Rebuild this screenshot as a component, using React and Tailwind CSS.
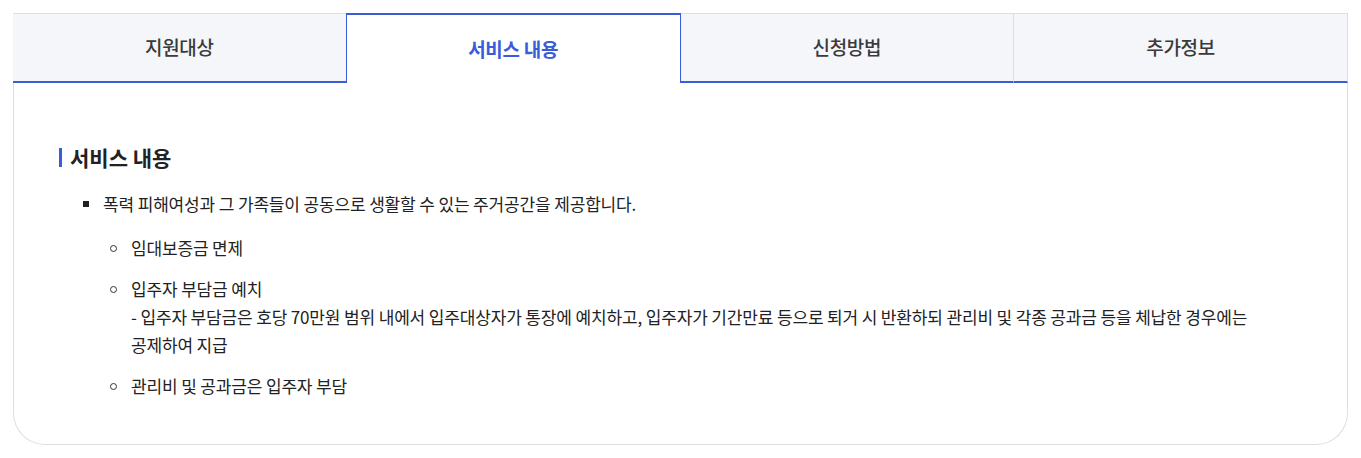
import React from 'react';

const TABS = ['지원대상', '서비스 내용', '신청방법', '추가정보'];

const FONT = { fontFamily: '"Noto Sans CJK KR", "Noto Sans", sans-serif' };

function SubItem({ children }) {
  return (
    <li className="flex gap-[14px] leading-[28px]">
      <span className="mt-[11px] w-[7px] h-[7px] shrink-0 rounded-full border border-[#333]" />
      <div>{children}</div>
    </li>
  );
}

export default function App() {
  const active = 1;
  return (
    <div className="bg-white w-[1361px] h-[458px] pt-[13px] px-[13px]" style={FONT}>
      <div className="border-x border-b border-[#dedede] rounded-b-[32px] h-[432px]">
        {/* Tabs */}
        <div className="flex h-[70px] -mx-px">
          {TABS.map((t, i) => i === active ? (
            <div key={t} className="flex-1 flex items-center justify-center bg-white border-t-2 border-x border-[#3b5cd9] text-[19px] font-bold text-[#3b5cd9] tracking-[-0.3px]">
              {t}
            </div>
          ) : (
            <div key={t} className={`flex-1 flex items-center justify-center bg-[#f5f6fa] border-t border-[#dedede] border-b-2 border-b-[#3b5cd9] text-[19px] font-medium text-[#3a3a3a] tracking-[-0.3px] ${i === 3 ? 'border-l border-r' : ''}`}>
              {t}
            </div>
          ))}
        </div>

        {/* Content */}
        <div className="px-[45px] pt-[62px] text-[#222] break-keep">
          <h3 className="flex items-center gap-[8px] text-[21px] font-bold leading-[24px]">
            <span className="w-[3px] h-[19px] bg-[#3b5cd9]" />
            서비스 내용
          </h3>
          <ul className="mt-[21px] pl-[24px] text-[17px] tracking-[-0.15px]">
            <li>
              <div className="flex gap-[14px] leading-[28px]">
                <span className="mt-[11px] w-[6px] h-[6px] shrink-0 bg-[#222]" />
                <span>폭력 피해여성과 그 가족들이 공동으로 생활할 수 있는 주거공간을 제공합니다.</span>
              </div>
              <ul className="mt-[16px] pl-[27px] flex flex-col gap-[13px]">
                <SubItem>임대보증금 면제</SubItem>
                <SubItem>
                  입주자 부담금 예치
                  <br />
                  - 입주자 부담금은 호당 70만원 범위 내에서 입주대상자가 통장에 예치하고, 입주자가 기간만료 등으로 퇴거 시 반환하되 관리비 및 각종 공과금 등을 체납한 경우에는 공제하여 지급
                </SubItem>
                <SubItem>관리비 및 공과금은 입주자 부담</SubItem>
              </ul>
            </li>
          </ul>
        </div>
      </div>
    </div>
  );
}
